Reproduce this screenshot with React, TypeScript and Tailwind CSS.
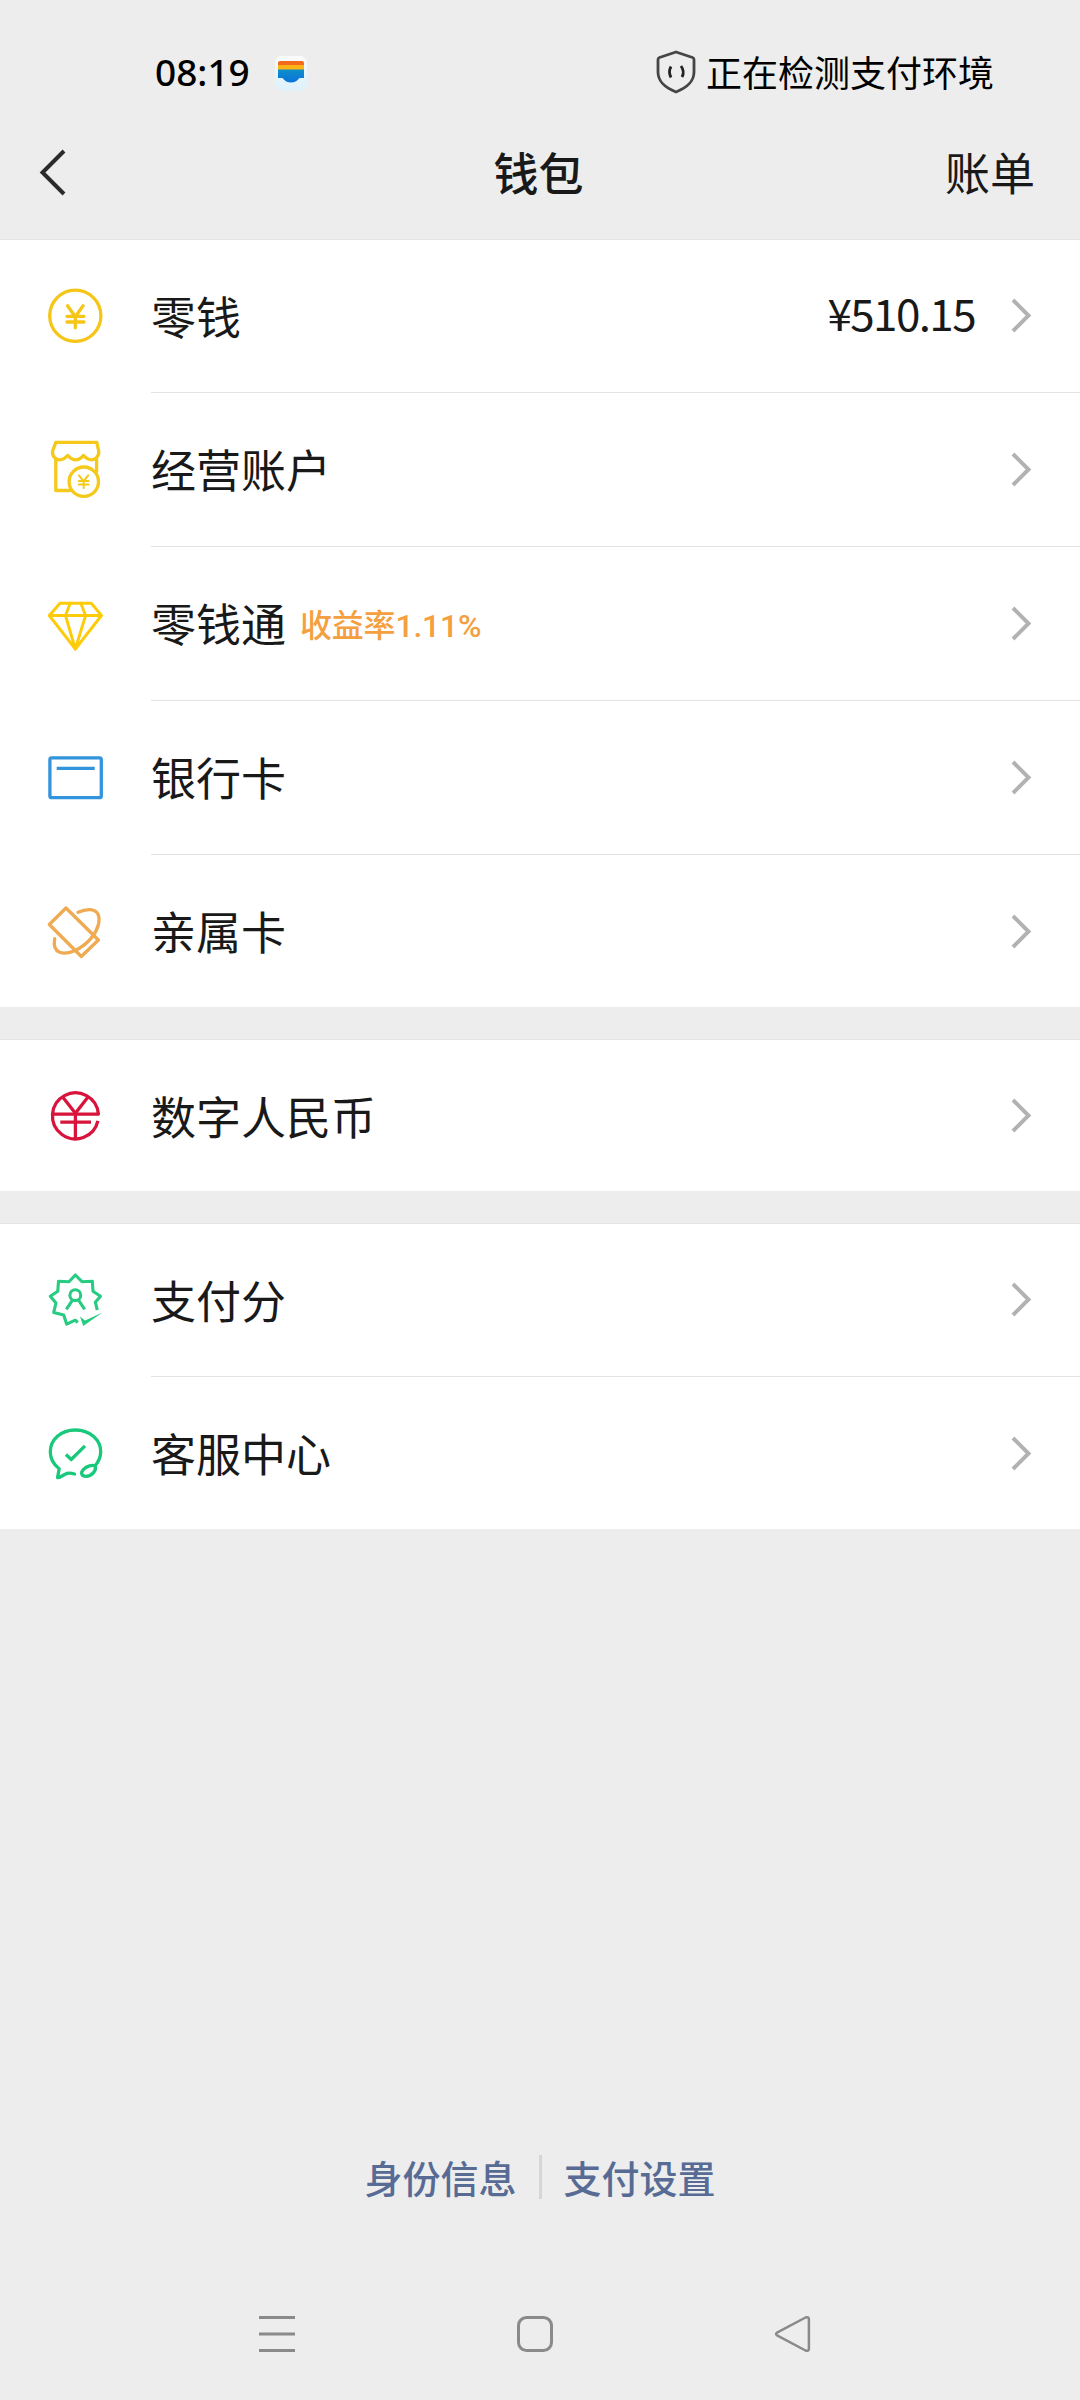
import type { ReactNode } from 'react';

type RowItem = {
  label: string;
  icon: ReactNode;
  height: string;
  note?: string;
  value?: string;
};

const iconProps = {
  viewBox: '0 0 60 60',
  fill: 'none',
  strokeWidth: 3.3,
  strokeLinecap: 'round' as const,
  strokeLinejoin: 'round' as const,
  className: 'size-[60px] shrink-0',
};

const CoinIcon = () => (
  <svg {...iconProps} stroke="#f5c518">
    <circle cx="30.3" cy="28.8" r="25.6" />
    <path d="M22.5 18.8l7.8 11 7.8-11M22 29.3h17M22 35h17M30.3 29.8v11" />
  </svg>
);

const ShopIcon = () => (
  <svg {...iconProps} stroke="#f5c91a">
    <path d="M10.8 2.4h41l1.9 8.6c.6 5-3.2 8.8-7.4 8.8-3.6 0-5.7-2.2-7.8-4.4-2.1 2.4-4.2 4.4-7.8 4.4s-5.8-2-8-4.4c-2.1 2.2-4.2 4.4-7.7 4.4-4.4 0-8.2-3.7-7.4-8.8z" />
    <path d="M10.8 19.5v31h14M51.6 19.5v12" />
    <circle cx="38.8" cy="41.7" r="14.7" />
    <path d="M34 35.4l4.6 6 4.6-6M33.8 41h9.8M33.8 44.6h9.8M38.7 41.4V48" strokeWidth="2" />
  </svg>
);

const DiamondIcon = () => (
  <svg {...iconProps} stroke="#fccc0a" strokeWidth={2.9}>
    <path d="M15 9.2h31.3L56.5 21.5 30.3 55 4.3 21.5zM4.3 21.5h52.2" />
    <path d="M25.2 9.2l-4.7 12.3L30.3 55l10.3-33.5L35.8 9.2" />
  </svg>
);

const BankCardIcon = () => (
  <svg {...iconProps} stroke="#3294dc">
    <rect x="4.9" y="9.9" width="51.4" height="39.8" rx="1.8" />
    <path d="M11.7 20.4h38" strokeLinecap="butt" />
  </svg>
);

const FamilyCardIcon = () => (
  <svg {...iconProps} stroke="#efaa52">
    <path d="M21 7L4.3 23.5l32 32L53.4 39z" />
    <path d="M33 11.3C41.5 7.5 49.8 7.4 52.8 12.7c3 6.3.5 16.3-7 25C36 48.8 22.5 54.3 14.7 51.3c-4.7-2-6.2-7.3-5-13.6" />
  </svg>
);

const DigitalYuanIcon = () => (
  <svg {...iconProps} stroke="#d8143c" strokeLinecap="butt">
    <path d="M52.9 34.9A23 23 0 1 1 53.4 28.2H7.5" />
    <path d="M17.7 11l12.7 16.2L43 11M30.4 27v26M15.3 36.2h30.7" />
  </svg>
);

const PayScoreIcon = () => (
  <svg {...iconProps} stroke="#28cb82" strokeWidth={3.1} strokeLinecap="butt">
    <path d="M32.8 51.5l-2.5-2.3-8.6 4-3-9.2-10-2.6L11 32l-5.7-6.8 7.5-5 .7-10 10.5.5L30.300 4l6.7 6.7 10.3-.5.7 10 7.5 5-5.2 6 2 7.8" />
    <circle cx="30.3" cy="24.2" r="5.4" />
    <path d="M21.3 38.3l6-9M39.7 38.3l-6-9" />
    <path d="M35 45.5l5 4 17.5-8L38.2 55z" fill="#28cb82" stroke="none" />
  </svg>
);

const ServiceIcon = () => (
  <svg {...iconProps} stroke="#18c97b">
    <path d="M29.5 51c-3-1-5-1.2-7.5-.7-2.6.8-5.5 4-9.5 4.4l1.7-9C8 41 5.3 35 5.3 29 5.3 16.5 16 7 30.3 7s25.4 9.5 25.4 21.7c0 5.6-2.2 10-5.7 14.2" />
    <path d="M50 42.7c2 5-3.5 10.6-9 10.6-4.5 0-5.8-3.5-2.5-7 3.5-3.5 8.5-4.6 11.5-3.6z" />
    <path d="M21 31.5l5.2 5L40 22.8" strokeLinecap="butt" />
  </svg>
);

const Chevron = () => (
  <svg viewBox="0 0 24 40" fill="none" stroke="#b2b2b2" strokeWidth="4" className="h-10 w-6 shrink-0">
    <path d="M4 4L19.5 19.5 4 35" />
  </svg>
);

const sections: RowItem[][] = [
  [
    { label: '零钱', icon: <CoinIcon />, height: 'h-[153px]', value: '¥510.15' },
    { label: '经营账户', icon: <ShopIcon />, height: 'h-[154px]' },
    { label: '零钱通', icon: <DiamondIcon />, height: 'h-[154px]', note: '收益率1.11%' },
    { label: '银行卡', icon: <BankCardIcon />, height: 'h-[154px]' },
    { label: '亲属卡', icon: <FamilyCardIcon />, height: 'h-[152px]' },
  ],
  [{ label: '数字人民币', icon: <DigitalYuanIcon />, height: 'h-[151px]' }],
  [
    { label: '支付分', icon: <PayScoreIcon />, height: 'h-[153px]' },
    { label: '客服中心', icon: <ServiceIcon />, height: 'h-[152px]' },
  ],
];

function Row({ item, last }: { item: RowItem; last: boolean }) {
  return (
    <div className={`flex pl-[45px] ${item.height}`}>
      <div className="flex items-center">{item.icon}</div>
      <div className={`ml-[46px] flex flex-1 items-center pr-[47px] ${last ? 'pt-px' : 'border-b border-[#e3e3e3]'}`}>
        <span className="pb-[2px] text-[45px] leading-none text-[#191919]">{item.label}</span>
        {item.note && (
          <span className="ml-[14px] pt-[4px] font-['Roboto','Noto_Sans_CJK_SC',sans-serif] text-[32px] leading-none font-medium tracking-[-0.2px] text-[#f5a040]">
            {item.note}
          </span>
        )}
        <div className="ml-auto flex items-center gap-[34px]">
          {item.value && (
            <span className="pb-[8px] text-[44px] leading-none tracking-[-1.6px] text-[#191919]">{item.value}</span>
          )}
          <Chevron />
        </div>
      </div>
    </div>
  );
}

function StatusBar() {
  return (
    <div className="flex h-[146px] items-center justify-between pr-[86px] pl-[155px]">
      <div className="flex items-center gap-[24px]">
        <span className="pb-[3px] font-['Noto_Sans',sans-serif] text-[37px] leading-none font-medium text-black">08:19</span>
        <svg viewBox="0 0 36 38" className="mt-px h-[38px] w-9">
          <defs>
            <linearGradient id="wallet-bg" x1="0" y1="0" x2="0" y2="1">
              <stop offset="0" stopColor="#fbfbfb" />
              <stop offset=".6" stopColor="#e4f4fd" />
              <stop offset="1" stopColor="#dff1fb" />
            </linearGradient>
            <linearGradient id="wallet-pocket" x1="0" y1="0" x2="0" y2="1">
              <stop offset="0" stopColor="#0f8fc9" />
              <stop offset="1" stopColor="#0a72dc" />
            </linearGradient>
          </defs>
          <rect x="1" y="1" width="32" height="35" rx="7" fill="url(#wallet-bg)" />
          <path d="M6 6h22a2 2 0 0 1 2 2v4H4V8a2 2 0 0 1 2-2z" fill="#f26a1b" />
          <path d="M4 10h26v6H4z" fill="#fbb316" />
          <path d="M4 14.5h26V23h-4c-2 0-2 4.5-9 4.5S10 23 8 23H4z" fill="url(#wallet-pocket)" />
        </svg>
      </div>
      <div className="flex items-center gap-[9px]">
        <svg viewBox="0 0 42 44" fill="none" stroke="#454545" strokeWidth="2.8" strokeLinejoin="round" className="mb-[2px] h-11 w-[42px]">
          <path d="M21 2l16.5 5.5q1.5.5 1.500 2V22c0 10-7 15.5-18 20C10 37.5 3 32 3 22V9.500q0-1.500 1.500-2z" />
          <path d="M16 16.5q-3 5.500 0 11M26 16q4 5.500 1 11" stroke="#222" />
        </svg>
        <span className="pb-[4px] text-[36px] leading-none text-black">正在检测支付环境</span>
      </div>
    </div>
  );
}

export default function App() {
  return (
    <div className="flex h-[2400px] w-[1080px] flex-col bg-[#ededed] font-['Noto_Sans_CJK_SC',sans-serif]">
      <StatusBar />

      {/* Title bar */}
      <div className="flex h-[93px] items-start justify-between pr-[45px] pl-[38px]">
        <svg viewBox="0 0 30 52" fill="none" stroke="#2a2a2a" strokeWidth="4" className="h-[52px] w-[88px]" preserveAspectRatio="xMinYMid meet">
          <path d="M26 5L4.5 26.5 26 48" />
        </svg>
        <h1 className="ml-[6px] pt-[3px] text-[45px] leading-none font-medium text-[#191919]">钱包</h1>
        <span className="pt-[3px] text-[45px] leading-none text-[#191919]">账单</span>
      </div>

      <div className="flex flex-col gap-8">
        {sections.map((rows, i) => (
          <div key={i} className="border-t border-[#e5e5e5] bg-white">
            {rows.map((item, j) => (
              <Row key={item.label} item={item} last={j === rows.length - 1} />
            ))}
          </div>
        ))}
      </div>

      {/* Footer links */}
      <div className="mt-auto flex items-center justify-center gap-[22px] text-[38px] leading-none font-medium text-[#576b95]">
        <span>身份信息</span>
        <span className="h-11 w-[3px] bg-[#d6d6d6]" />
        <span>支付设置</span>
      </div>

      {/* System navigation */}
      <div className="mt-[91px] flex h-[110px] items-center justify-between pr-[267px] pb-[22px] pl-[257px]">
        <svg viewBox="0 0 40 40" fill="none" stroke="#8a8a8a" strokeWidth="3" className="size-10">
          <path d="M2 3.5h36M2 20h36M2 36.5h36" />
        </svg>
        <svg viewBox="0 0 40 40" fill="none" stroke="#8a8a8a" strokeWidth="3" className="size-10">
          <rect x="3.5" y="3.5" width="33" height="33" rx="8" />
        </svg>
        <svg viewBox="0 0 40 40" fill="none" stroke="#8a8a8a" strokeWidth="2.5" strokeLinejoin="round" className="size-10">
          <path d="M4 18.7L32.5 3.5q3.2-1.2 3.4 1.7v29.6q-.2 2.9-3.4 1.7L4 21.3q-1.8-1.3 0-2.6z" />
        </svg>
      </div>
    </div>
  );
}
